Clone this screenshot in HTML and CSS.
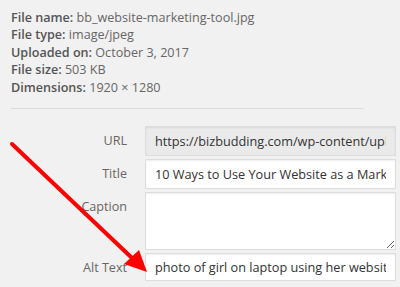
FILE: index.html
```html
<!DOCTYPE html>
<html>
<head>
<meta charset="utf-8">
<link rel="stylesheet" href="styles.css">
</head>
<body>
<div class="details">
  <div><strong>File name:</strong> bb_website-marketing-tool.jpg</div>
  <div><strong>File type:</strong> image/jpeg</div>
  <div><strong>Uploaded on:</strong> October 3, 2017</div>
  <div><strong>File size:</strong> 503 KB</div>
  <div><strong>Dimensions:</strong> 1920 × 1280</div>
</div>
<div class="rule"></div>

<div class="settings">
  <label class="name" for="url">URL</label>
  <input type="text" id="url" class="field readonly" value="https://bizbudding.com/wp-content/uploads/2017/10/bb_website-marketing-tool.jpg" readonly>

  <label class="name" for="title">Title</label>
  <input type="text" id="title" class="field" value="10 Ways to Use Your Website as a Marketing Tool">

  <label class="name" for="caption">Caption</label>
  <textarea id="caption" class="field caption"></textarea>

  <label class="name" for="alt">Alt Text</label>
  <input type="text" id="alt" class="field" value="photo of girl on laptop using her website">
</div>

<svg class="arrow" width="400" height="287" viewBox="0 0 400 287">
  <line x1="12" y1="144" x2="132" y2="258" stroke="#f00" stroke-width="4" stroke-linecap="round"/>
  <polygon points="147,272 124,264 139,250" fill="#f00"/>
</svg>
</body>
</html>
```

FILE: styles.css
```css
html, body {
  margin: 0;
  padding: 0;
}
body {
  width: 400px;
  height: 287px;
  overflow: hidden;
  background: #f1f1f1;
  font-family: "Open Sans", "Noto Sans", sans-serif;
  font-size: 12.6px;
  color: #666;
  position: relative;
}
.details {
  padding: 9px 0 12px 11px;
  line-height: 17.4px;
  white-space: nowrap;
}
.details strong {
  font-weight: 600;
  color: #555;
}
.rule {
  margin: 0 36px 0 11px;
  border-top: 1px solid #dcdcdc;
}
.settings {
  display: grid;
  grid-template-columns: 127px 251px;
  grid-template-rows: 30px 30px 58px 28px;
  column-gap: 18px;
  row-gap: 3px;
  margin-top: 17px;
}
.name {
  text-align: right;
  line-height: 30px;
  color: #666;
}
.field {
  box-sizing: border-box;
  width: 100%;
  height: 100%;
  margin: 0;
  padding: 0 9px;
  border: 1px solid #ddd;
  background: #fff;
  box-shadow: inset 0 1px 2px rgba(0, 0, 0, .07);
  font-family: "Open Sans", "Noto Sans", sans-serif;
  font-size: 12.7px;
  color: #333;
  outline: none;
}
.readonly {
  background: #eaeaea;
}
.caption {
  resize: vertical;
  padding: 6px 9px;
}
.arrow {
  position: absolute;
  left: 0;
  top: 0;
  pointer-events: none;
}
```
